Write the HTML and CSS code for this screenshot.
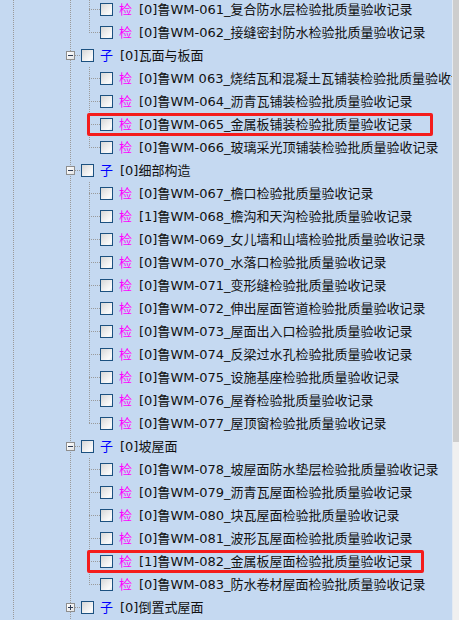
FILE: index.html
```html
<!DOCTYPE html>
<html lang="zh-CN">

<head>
  <meta charset="UTF-8">
  <meta name="viewport" content="width=device-width, initial-scale=1.0">
  <title>检验批目录</title>
  <link rel="stylesheet" href="styles.css">
</head>

<body>
  <div class="panel">
    <div class="tree">
      <!-- 上一个分部的尾部 -->
      <div class="kids">
        <div class="row leaf"><span class="elbow"></span><span class="box"></span><span class="tag jian">检</span><span class="label">[0]鲁WM-061_复合防水层检验批质量验收记录</span></div>
        <div class="row leaf"><span class="elbow"></span><span class="box"></span><span class="tag jian">检</span><span class="label">[0]鲁WM-062_接缝密封防水检验批质量验收记录</span></div>
      </div>

      <div class="row branch"><span class="toggle minus"></span><span class="elbow short"></span><span class="box"></span><span class="tag zi">子</span><span class="label">[0]瓦面与板面</span></div>
      <div class="kids">
        <div class="row leaf"><span class="elbow"></span><span class="box"></span><span class="tag jian">检</span><span class="label">[0]鲁WM 063_烧结瓦和混凝土瓦铺装检验批质量验收记录</span></div>
        <div class="row leaf"><span class="elbow"></span><span class="box"></span><span class="tag jian">检</span><span class="label">[0]鲁WM-064_沥青瓦铺装检验批质量验收记录</span></div>
        <div class="row leaf marked mark-wide"><span class="elbow"></span><span class="box"></span><span class="tag jian">检</span><span class="label">[0]鲁WM-065_金属板铺装检验批质量验收记录</span></div>
        <div class="row leaf"><span class="elbow"></span><span class="box"></span><span class="tag jian">检</span><span class="label">[0]鲁WM-066_玻璃采光顶铺装检验批质量验收记录</span></div>
      </div>

      <div class="row branch"><span class="toggle minus"></span><span class="elbow short"></span><span class="box"></span><span class="tag zi">子</span><span class="label">[0]细部构造</span></div>
      <div class="kids">
        <div class="row leaf"><span class="elbow"></span><span class="box"></span><span class="tag jian">检</span><span class="label">[0]鲁WM-067_檐口检验批质量验收记录</span></div>
        <div class="row leaf"><span class="elbow"></span><span class="box"></span><span class="tag jian">检</span><span class="label">[1]鲁WM-068_檐沟和天沟检验批质量验收记录</span></div>
        <div class="row leaf"><span class="elbow"></span><span class="box"></span><span class="tag jian">检</span><span class="label">[0]鲁WM-069_女儿墙和山墙检验批质量验收记录</span></div>
        <div class="row leaf"><span class="elbow"></span><span class="box"></span><span class="tag jian">检</span><span class="label">[0]鲁WM-070_水落口检验批质量验收记录</span></div>
        <div class="row leaf"><span class="elbow"></span><span class="box"></span><span class="tag jian">检</span><span class="label">[0]鲁WM-071_变形缝检验批质量验收记录</span></div>
        <div class="row leaf"><span class="elbow"></span><span class="box"></span><span class="tag jian">检</span><span class="label">[0]鲁WM-072_伸出屋面管道检验批质量验收记录</span></div>
        <div class="row leaf"><span class="elbow"></span><span class="box"></span><span class="tag jian">检</span><span class="label">[0]鲁WM-073_屋面出入口检验批质量验收记录</span></div>
        <div class="row leaf"><span class="elbow"></span><span class="box"></span><span class="tag jian">检</span><span class="label">[0]鲁WM-074_反梁过水孔检验批质量验收记录</span></div>
        <div class="row leaf"><span class="elbow"></span><span class="box"></span><span class="tag jian">检</span><span class="label">[0]鲁WM-075_设施基座检验批质量验收记录</span></div>
        <div class="row leaf"><span class="elbow"></span><span class="box"></span><span class="tag jian">检</span><span class="label">[0]鲁WM-076_屋脊检验批质量验收记录</span></div>
        <div class="row leaf"><span class="elbow"></span><span class="box"></span><span class="tag jian">检</span><span class="label">[0]鲁WM-077_屋顶窗检验批质量验收记录</span></div>
      </div>

      <div class="row branch"><span class="toggle minus"></span><span class="elbow short"></span><span class="box"></span><span class="tag zi">子</span><span class="label">[0]坡屋面</span></div>
      <div class="kids">
        <div class="row leaf"><span class="elbow"></span><span class="box"></span><span class="tag jian">检</span><span class="label">[0]鲁WM-078_坡屋面防水垫层检验批质量验收记录</span></div>
        <div class="row leaf"><span class="elbow"></span><span class="box"></span><span class="tag jian">检</span><span class="label">[0]鲁WM-079_沥青瓦屋面检验批质量验收记录</span></div>
        <div class="row leaf"><span class="elbow"></span><span class="box"></span><span class="tag jian">检</span><span class="label">[0]鲁WM-080_块瓦屋面检验批质量验收记录</span></div>
        <div class="row leaf"><span class="elbow"></span><span class="box"></span><span class="tag jian">检</span><span class="label">[0]鲁WM-081_波形瓦屋面检验批质量验收记录</span></div>
        <div class="row leaf marked mark-narrow"><span class="elbow"></span><span class="box"></span><span class="tag jian">检</span><span class="label">[1]鲁WM-082_金属板屋面检验批质量验收记录</span></div>
        <div class="row leaf"><span class="elbow"></span><span class="box"></span><span class="tag jian">检</span><span class="label">[0]鲁WM-083_防水卷材屋面检验批质量验收记录</span></div>
      </div>

      <div class="row branch"><span class="toggle plus"></span><span class="elbow short"></span><span class="box"></span><span class="tag zi">子</span><span class="label">[0]倒置式屋面</span></div>
    </div>

    <div class="scrollbar">
      <div class="thumb"></div>
    </div>
  </div>
</body>

</html>
```

FILE: styles.css
```css
body {
  margin: 0;
  padding: 0;
  background: #c5d9f1;
  font-family: "DejaVu Sans", "Noto Sans CJK SC", sans-serif;
  font-size: 13px;
  color: #111;
}

.panel {
  display: flex;
  height: 620px;
  overflow: hidden;
}

/* 树：两条贯穿的虚线（根层级 + 子分部层级） */
.tree {
  flex: 1;
  min-width: 0;
  overflow: hidden;
  padding-top: 0;
  margin-top: -2px;
  background:
    repeating-linear-gradient(#9a9a9a 0 1px, transparent 1px 2px) 13px 0 / 1px 100% no-repeat,
    repeating-linear-gradient(#9a9a9a 0 1px, transparent 1px 2px) 70px 0 / 1px 100% no-repeat,
    #c5d9f1;
}

/* 子节点组：竖线停在最后一行中间 */
.kids {
  background: repeating-linear-gradient(#9a9a9a 0 1px, transparent 1px 2px) 89px 0 / 1px calc(100% - 12px) no-repeat;
}

.row {
  position: relative;
  display: flex;
  align-items: center;
  height: 23px;
  white-space: nowrap;
}

.row.leaf {
  padding-left: 89px;
}

.row.branch {
  padding-left: 66px;
}

.elbow {
  flex: none;
  width: 11px;
  height: 1px;
  background: repeating-linear-gradient(to right, #9a9a9a 0 1px, transparent 1px 2px);
}

.elbow.short {
  width: 6px;
}

.box {
  flex: none;
  box-sizing: border-box;
  width: 13px;
  height: 13px;
  border: 1px solid #1c5180;
  background: linear-gradient(135deg, #d6d6d6 0%, #ececec 45%, #fbfbfb 80%, #dde3ea 100%);
}

.toggle {
  flex: none;
  position: relative;
  box-sizing: border-box;
  width: 9px;
  height: 9px;
  border: 1px solid #8e8e8e;
  background: linear-gradient(135deg, #ffffff 0%, #e4e4e4 100%);
}

.toggle::before,
.toggle.plus::after {
  content: "";
  position: absolute;
  left: 1px;
  top: 3px;
  width: 5px;
  height: 1px;
  background: #2b3a55;
}

.toggle.plus::after {
  left: 3px;
  top: 1px;
  width: 1px;
  height: 5px;
}

.tag {
  flex: none;
  width: 13px;
  margin: 0 7px 0 6px;
  font-size: 13px;
  line-height: 13px;
}

.tag.jian {
  color: #ff00ff;
}

.tag.zi {
  color: #0000ff;
}

.label {
  line-height: 23px;
}

/* 红框标注 */
.marked::after {
  content: "";
  position: absolute;
  left: 87px;
  top: 0;
  height: 23px;
  box-sizing: border-box;
  border: 3px solid #f41c1c;
  border-radius: 2px;
}

.mark-wide::after {
  width: 346px;
}

.mark-narrow::after {
  width: 337px;
}

.scrollbar {
  flex: none;
  width: 6px;
  border-left: 1px solid #e4eaf2;
  background: #f0f0f0;
}

.thumb {
  height: 442px;
  background: #cdcdcd;
}
```
